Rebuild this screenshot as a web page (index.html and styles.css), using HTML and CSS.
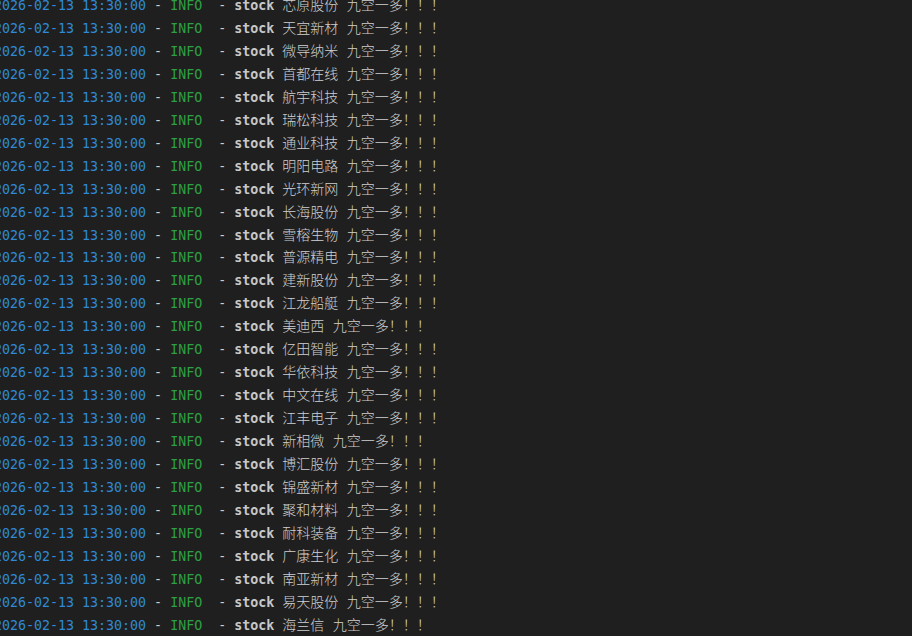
FILE: index.html
```html
<!DOCTYPE html>
<html lang="zh-CN">
<head>
<meta charset="utf-8">
<title>terminal</title>
<link rel="stylesheet" href="styles.css">
</head>
<body>
<div class="term">
<div class="line"><span class="ts">2026-02-13 13:30:00</span> - <span class="lvl">INFO</span>  - <span class="src">stock</span> <span class="msg">芯原股份 九空一多！！！</span></div>
<div class="line"><span class="ts">2026-02-13 13:30:00</span> - <span class="lvl">INFO</span>  - <span class="src">stock</span> <span class="msg">天宜新材 九空一多！！！</span></div>
<div class="line"><span class="ts">2026-02-13 13:30:00</span> - <span class="lvl">INFO</span>  - <span class="src">stock</span> <span class="msg">微导纳米 九空一多！！！</span></div>
<div class="line"><span class="ts">2026-02-13 13:30:00</span> - <span class="lvl">INFO</span>  - <span class="src">stock</span> <span class="msg">首都在线 九空一多！！！</span></div>
<div class="line"><span class="ts">2026-02-13 13:30:00</span> - <span class="lvl">INFO</span>  - <span class="src">stock</span> <span class="msg">航宇科技 九空一多！！！</span></div>
<div class="line"><span class="ts">2026-02-13 13:30:00</span> - <span class="lvl">INFO</span>  - <span class="src">stock</span> <span class="msg">瑞松科技 九空一多！！！</span></div>
<div class="line"><span class="ts">2026-02-13 13:30:00</span> - <span class="lvl">INFO</span>  - <span class="src">stock</span> <span class="msg">通业科技 九空一多！！！</span></div>
<div class="line"><span class="ts">2026-02-13 13:30:00</span> - <span class="lvl">INFO</span>  - <span class="src">stock</span> <span class="msg">明阳电路 九空一多！！！</span></div>
<div class="line"><span class="ts">2026-02-13 13:30:00</span> - <span class="lvl">INFO</span>  - <span class="src">stock</span> <span class="msg">光环新网 九空一多！！！</span></div>
<div class="line"><span class="ts">2026-02-13 13:30:00</span> - <span class="lvl">INFO</span>  - <span class="src">stock</span> <span class="msg">长海股份 九空一多！！！</span></div>
<div class="line"><span class="ts">2026-02-13 13:30:00</span> - <span class="lvl">INFO</span>  - <span class="src">stock</span> <span class="msg">雪榕生物 九空一多！！！</span></div>
<div class="line"><span class="ts">2026-02-13 13:30:00</span> - <span class="lvl">INFO</span>  - <span class="src">stock</span> <span class="msg">普源精电 九空一多！！！</span></div>
<div class="line"><span class="ts">2026-02-13 13:30:00</span> - <span class="lvl">INFO</span>  - <span class="src">stock</span> <span class="msg">建新股份 九空一多！！！</span></div>
<div class="line"><span class="ts">2026-02-13 13:30:00</span> - <span class="lvl">INFO</span>  - <span class="src">stock</span> <span class="msg">江龙船艇 九空一多！！！</span></div>
<div class="line"><span class="ts">2026-02-13 13:30:00</span> - <span class="lvl">INFO</span>  - <span class="src">stock</span> <span class="msg">美迪西 九空一多！！！</span></div>
<div class="line"><span class="ts">2026-02-13 13:30:00</span> - <span class="lvl">INFO</span>  - <span class="src">stock</span> <span class="msg">亿田智能 九空一多！！！</span></div>
<div class="line"><span class="ts">2026-02-13 13:30:00</span> - <span class="lvl">INFO</span>  - <span class="src">stock</span> <span class="msg">华依科技 九空一多！！！</span></div>
<div class="line"><span class="ts">2026-02-13 13:30:00</span> - <span class="lvl">INFO</span>  - <span class="src">stock</span> <span class="msg">中文在线 九空一多！！！</span></div>
<div class="line"><span class="ts">2026-02-13 13:30:00</span> - <span class="lvl">INFO</span>  - <span class="src">stock</span> <span class="msg">江丰电子 九空一多！！！</span></div>
<div class="line"><span class="ts">2026-02-13 13:30:00</span> - <span class="lvl">INFO</span>  - <span class="src">stock</span> <span class="msg">新相微 九空一多！！！</span></div>
<div class="line"><span class="ts">2026-02-13 13:30:00</span> - <span class="lvl">INFO</span>  - <span class="src">stock</span> <span class="msg">博汇股份 九空一多！！！</span></div>
<div class="line"><span class="ts">2026-02-13 13:30:00</span> - <span class="lvl">INFO</span>  - <span class="src">stock</span> <span class="msg">锦盛新材 九空一多！！！</span></div>
<div class="line"><span class="ts">2026-02-13 13:30:00</span> - <span class="lvl">INFO</span>  - <span class="src">stock</span> <span class="msg">聚和材料 九空一多！！！</span></div>
<div class="line"><span class="ts">2026-02-13 13:30:00</span> - <span class="lvl">INFO</span>  - <span class="src">stock</span> <span class="msg">耐科装备 九空一多！！！</span></div>
<div class="line"><span class="ts">2026-02-13 13:30:00</span> - <span class="lvl">INFO</span>  - <span class="src">stock</span> <span class="msg">广康生化 九空一多！！！</span></div>
<div class="line"><span class="ts">2026-02-13 13:30:00</span> - <span class="lvl">INFO</span>  - <span class="src">stock</span> <span class="msg">南亚新材 九空一多！！！</span></div>
<div class="line"><span class="ts">2026-02-13 13:30:00</span> - <span class="lvl">INFO</span>  - <span class="src">stock</span> <span class="msg">易天股份 九空一多！！！</span></div>
<div class="line"><span class="ts">2026-02-13 13:30:00</span> - <span class="lvl">INFO</span>  - <span class="src">stock</span> <span class="msg">海兰信 九空一多！！！</span></div>
</div>
</body>
</html>
```
FILE: styles.css
```css
html, body {
  margin: 0;
  padding: 0;
  background: #1f1f1f;
  overflow: hidden;
  height: 100%;
}

.term {
  margin: -6px 0 0 -6px;
  font-family: "DejaVu Sans Mono", "Noto Sans CJK SC", monospace;
  font-size: 13.3px;
  color: #cccccc;
}

.line {
  height: 22.96px;
  line-height: 22.96px;
  white-space: pre;
}

.ts {
  color: #2f8ad8;
}

.lvl {
  color: #2ea043;
}

.src {
  font-weight: bold;
  color: #c8c8c8;
}

.msg {
  font-family: "DejaVu Sans Mono", "Noto Sans CJK SC", sans-serif;
  font-size: 14px;
  font-weight: 300;
  color: #d0d0d0;
}
```
